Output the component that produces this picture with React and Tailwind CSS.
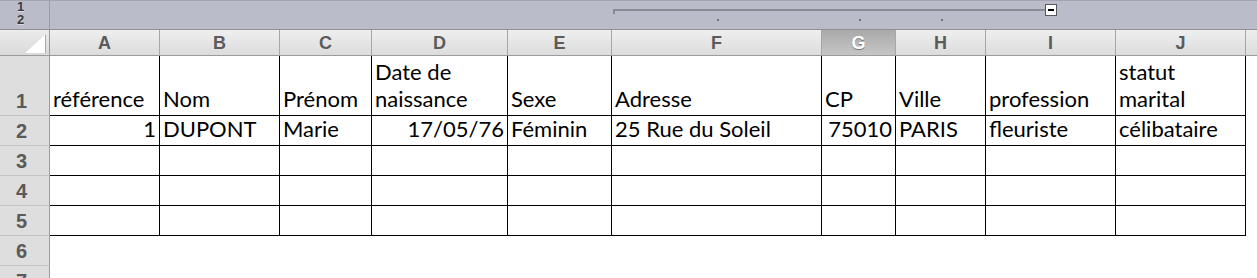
import React from 'react';

const cols = [
  { key: 'A', w: 'w-[110px]' },
  { key: 'B', w: 'w-[120px]' },
  { key: 'C', w: 'w-[92px]' },
  { key: 'D', w: 'w-[136px]' },
  { key: 'E', w: 'w-[104px]' },
  { key: 'F', w: 'w-[210px]' },
  { key: 'G', w: 'w-[74px]' },
  { key: 'H', w: 'w-[90px]' },
  { key: 'I', w: 'w-[130px]' },
  { key: 'J', w: 'w-[130px]' },
];

const header = ['référence', 'Nom', 'Prénom', 'Date de\nnaissance', 'Sexe', 'Adresse', 'CP', 'Ville', 'profession', 'statut\nmarital'];
const row2 = [
  { t: '1', r: true },
  { t: 'DUPONT' },
  { t: 'Marie' },
  { t: '17/05/76', r: true },
  { t: 'Féminin' },
  { t: '25 Rue du Soleil' },
  { t: '75010', r: true },
  { t: 'PARIS' },
  { t: 'fleuriste' },
  { t: 'célibataire' },
];

function RowHead({ n, h }) {
  return (
    <div className={`w-[50px] ${h} shrink-0 bg-[#dedede] border-r border-b border-r-[#9b9b9b] border-b-[#c4c4c4] flex items-end justify-center pr-[6px] pb-[3px] font-['Liberation_Sans',sans-serif] font-bold text-[20px] leading-[22px] text-[#5a5a5a]`}>
      {n}
    </div>
  );
}

function Cell({ w, h, text, right, bordered }) {
  return (
    <div
      className={`${w} ${h} shrink-0 flex items-end overflow-visible whitespace-pre px-[3px] pb-[3px] text-[22px] leading-[27px] text-black ${right ? 'justify-end' : ''} ${bordered ? 'border-r border-b border-black' : ''}`}
    >
      <span>{text}</span>
    </div>
  );
}

export default function App() {
  return (
    <div className="w-[1257px] h-[278px] overflow-hidden bg-white font-['Lato',sans-serif]">
      {/* outline bar */}
      <div className="h-[30px] flex bg-[#babdc9] border-t border-t-[#a3a6b1] border-b border-b-[#8e9099]">
        <div className="w-[50px] shrink-0 border-r border-[#9a9da8] flex justify-center">
          <div className="ml-[-8px] mt-[-1px] w-[11px] flex flex-col items-center font-['Liberation_Sans',sans-serif] font-bold text-[13px] leading-[13px] text-[#3a3a3a] [text-shadow:0_1px_0_#ddd]">
            <span>1</span>
            <span>2</span>
          </div>
        </div>
        <div className="flex-1 relative">
          <div className="absolute left-[563px] top-[8px] w-[434px] h-[2px] bg-[#8a8c94]" />
          <div className="absolute left-[563px] top-[8px] w-[2px] h-[5px] bg-[#8a8c94]" />
          <div className="absolute left-[995px] top-[3px] w-[12px] h-[12px] bg-white border border-[#55575d] flex items-center justify-center">
            <div className="w-[6px] h-[2px] bg-black" />
          </div>
          <div className="absolute left-[667px] top-[18px] w-[2px] h-[2px] bg-[#6f717a]" />
          <div className="absolute left-[809px] top-[18px] w-[2px] h-[2px] bg-[#6f717a]" />
          <div className="absolute left-[891px] top-[18px] w-[2px] h-[2px] bg-[#6f717a]" />
        </div>
      </div>

      {/* column headers */}
      <div className="flex h-[26px]">
        <div className="w-[50px] shrink-0 bg-gradient-to-b from-[#ececec] to-[#d9d9d9] border-r border-b border-r-[#9b9b9b] border-b-[#9b9b9b] relative">
          <div className="absolute right-[4px] bottom-[2px] w-0 h-0 border-l-[20px] border-l-transparent border-b-[18px] border-b-white" />
          <div className="absolute right-[3px] bottom-[2px] w-[1px] h-[18px] bg-[#a9a9a9]" />
        </div>
        {cols.map((c) => (
          <div
            key={c.key}
            className={`${c.w} shrink-0 border-r border-b border-r-[#a6a6a6] border-b-[#9b9b9b] flex items-center justify-center font-['Liberation_Sans',sans-serif] font-bold text-[18px] leading-[20px] ${
              c.key === 'G'
                ? 'bg-gradient-to-b from-[#a9a9a9] to-[#c6c6c6] text-white [text-shadow:0_1px_0_#777]'
                : 'bg-gradient-to-b from-[#efefef] to-[#dcdcdc] text-[#5b5b5b]'
            }`}
          >
            {c.key}
          </div>
        ))}
        <div className="flex-1 bg-gradient-to-b from-[#efefef] to-[#dcdcdc] border-b border-b-[#9b9b9b]" />
      </div>

      {/* row 1 */}
      <div className="flex">
        <RowHead n="1" h="h-[60px]" />
        {cols.map((c, i) => (
          <Cell key={c.key} w={c.w} h="h-[60px]" text={header[i]} bordered />
        ))}
      </div>

      {/* row 2 */}
      <div className="flex">
        <RowHead n="2" h="h-[30px]" />
        {cols.map((c, i) => (
          <Cell key={c.key} w={c.w} h="h-[30px]" text={row2[i].t} right={row2[i].r} bordered />
        ))}
      </div>

      {[3, 4, 5].map((n) => (
        <div key={n} className="flex">
          <RowHead n={String(n)} h="h-[30px]" />
          {cols.map((c) => (
            <Cell key={c.key} w={c.w} h="h-[30px]" text="" bordered />
          ))}
        </div>
      ))}

      {[6, 7].map((n) => (
        <div key={n} className="flex">
          <RowHead n={String(n)} h="h-[30px]" />
        </div>
      ))}
    </div>
  );
}
